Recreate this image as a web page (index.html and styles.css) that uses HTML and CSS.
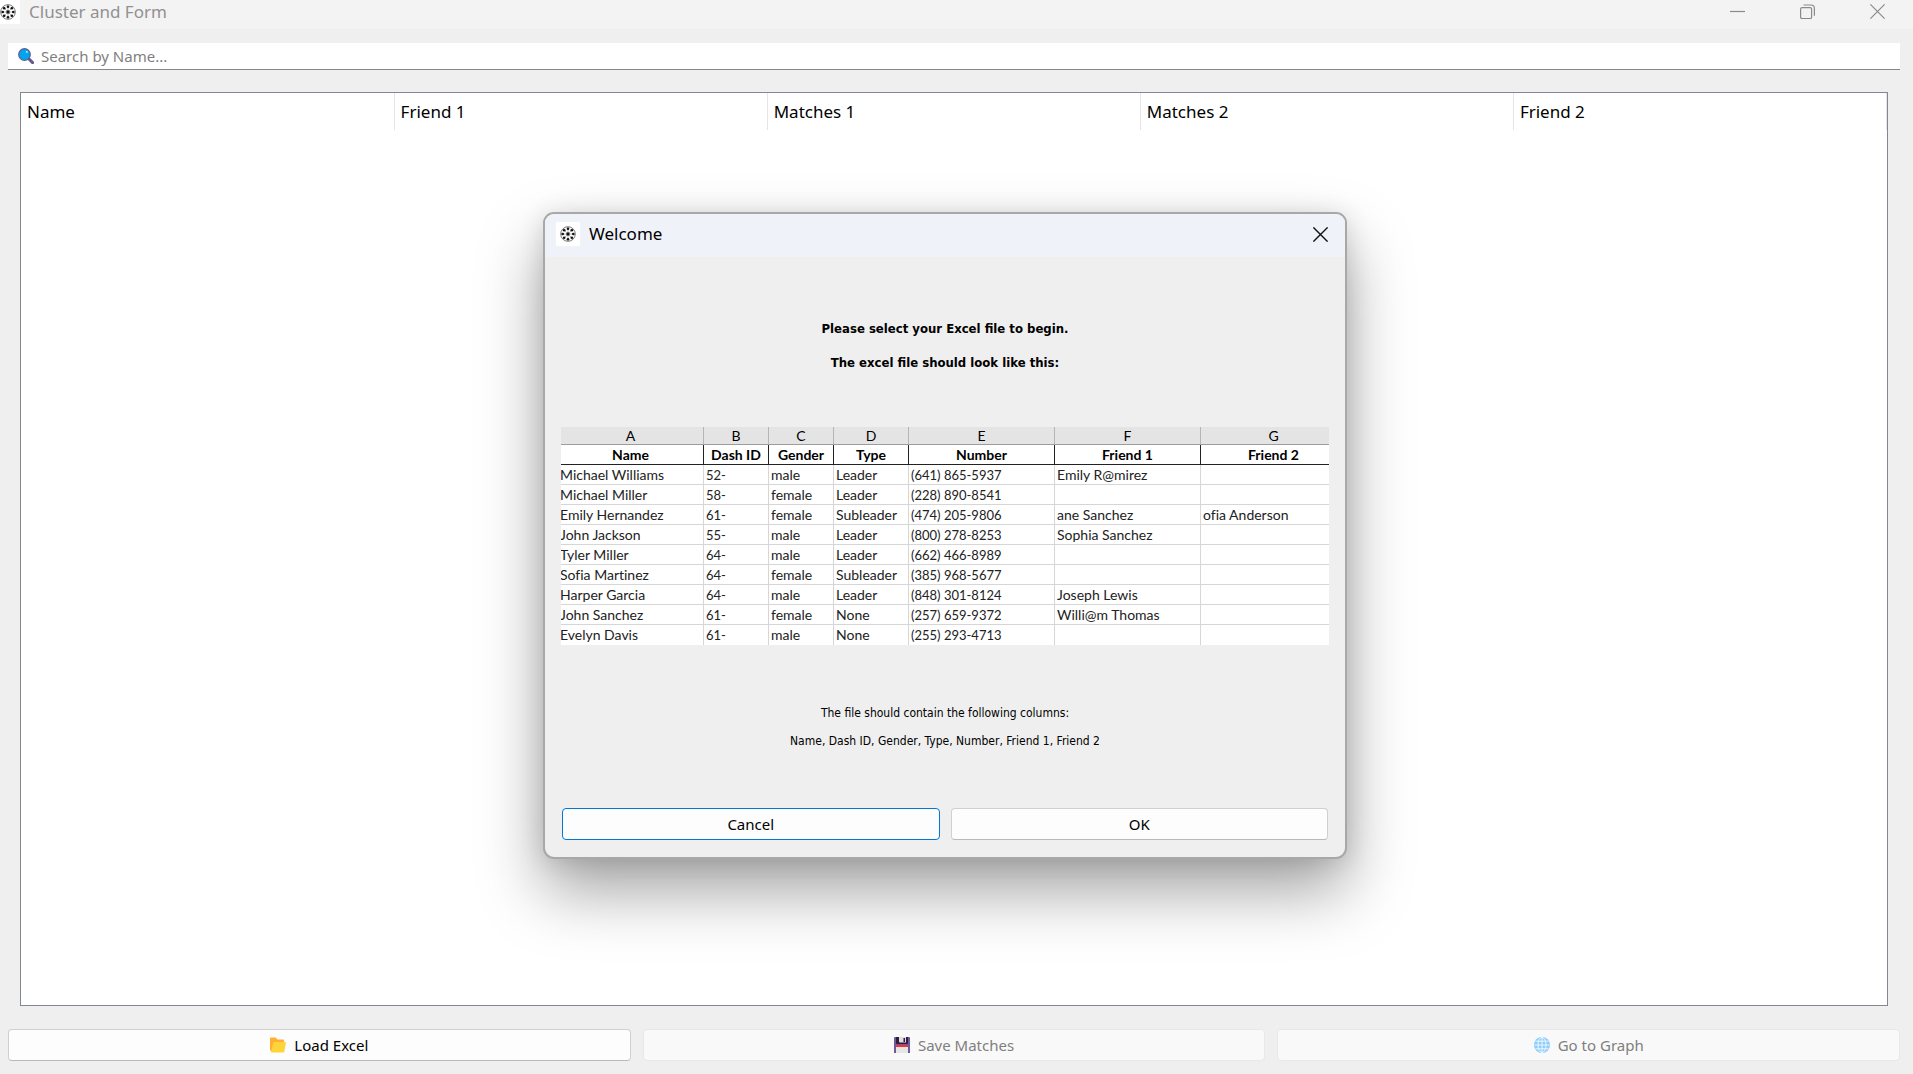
FILE: index.html
```html
<!DOCTYPE html>
<html lang="en">
<head>
<meta charset="utf-8">
<meta name="viewport" content="width=device-width, initial-scale=1">
<title>Cluster and Form</title>
<link rel="stylesheet" href="styles.css">
</head>
<body>
<svg class="defs" aria-hidden="true">
  <symbol id="wheel" viewBox="0 0 16 16">
    <circle cx="8" cy="8" r="7.3" fill="none" stroke="#777" stroke-width="1"/>
    <path d="M8 1v14M1 8h14M3 3l10 10M13 3L3 13" stroke="#999" stroke-width=".7"/>
    <g fill="#111"><circle cx="8" cy="8" r="1.7"/><circle cx="8" cy="2.7" r="1.3"/><circle cx="8" cy="13.3" r="1.3"/><circle cx="2.7" cy="8" r="1.3"/><circle cx="13.3" cy="8" r="1.3"/><circle cx="4.2" cy="4.2" r="1.3"/><circle cx="11.8" cy="4.2" r="1.3"/><circle cx="4.2" cy="11.8" r="1.3"/><circle cx="11.8" cy="11.8" r="1.3"/></g>
  </symbol>
</svg>
<div class="window">
  <header class="titlebar">
    <span class="app-icon"><svg width="16" height="16"><use href="#wheel"/></svg></span>
    <h1 class="title">Cluster and Form</h1>
    <div class="controls">
      <button class="control" aria-label="Minimize"><svg width="15" height="15" viewBox="0 0 15 15"><path d="M0 7.5h15"/></svg></button>
      <button class="control" aria-label="Restore"><svg width="15" height="15" viewBox="0 0 15 15"><rect x=".6" y="3.6" width="11" height="11" rx="1.5"/><path d="M3.5 1h7.5a3.4 3.4 0 0 1 3.4 3.4v7.4"/></svg></button>
      <button class="control" aria-label="Close"><svg width="15" height="15" viewBox="0 0 15 15"><path d="M.4.4l14.2 14.2M14.6.4L.4 14.6"/></svg></button>
    </div>
  </header>
  <main class="content">
    <label class="search">
      <svg width="16" height="16" viewBox="0 0 16 16"><path d="M10 10l4.6 4.6" stroke="#635994" stroke-width="3" stroke-linecap="round"/><circle cx="6.5" cy="6.5" r="5.8" fill="#00a6ed" stroke="#635994" stroke-width="1.2"/><circle cx="8.8" cy="4" r="1" fill="#b9e8ff"/></svg>
      <input class="search-input" type="text" placeholder="Search by Name..." aria-label="Search by Name">
    </label>
    <section class="results">
      <table class="matches">
        <thead><tr><th>Name</th><th>Friend 1</th><th>Matches 1</th><th>Matches 2</th><th>Friend 2</th></tr></thead>
      </table>
    </section>
    <div class="actions">
      <button class="button"><svg width="16" height="16" viewBox="0 0 16 16"><path d="M0 1.5Q0 .5 1 .5h4.5l2 2H13q1 0 1 1V14H1.5Q0 14 0 12.500z" fill="#ffb02e"/><path d="M4.500 5h10.700q.9 0 .7.900L14.300 14.700q-.2.800-1 .800H1.800q-1 0-.8-1L3.300 5.800Q3.500 5 4.500 5z" fill="#ffd43a"/></svg>Load Excel</button>
      <button class="button" disabled><svg width="16" height="16" viewBox="0 0 16 16"><path d="M0 1q0-1 1-1h14q1 0 1 1v15H0z" fill="#6b5b9a"/><path d="M2 0h12v6q0 1-1 1H3Q2 7 2 6z" fill="#321b41"/><path d="M5 0h7v5.500H6q-1 0-1-1z" fill="#e0e0e0"/><path d="M9.500 1h1.500v4H9.500z" fill="#321b41"/><path d="M2 8h12v8H2z" fill="#e6e6e6"/><path d="M2 8h12v2H2z" fill="#f8312f"/></svg>Save Matches</button>
      <button class="button" disabled><svg width="16" height="16" viewBox="0 0 16 16"><circle cx="8" cy="8" r="8" fill="#8dcdfc"/><g fill="none" stroke="#f4faff" stroke-width=".9"><path d="M8 0v16M.5 8h15M1.500 4.200h13M1.500 11.800h13"/><ellipse cx="8" cy="8" rx="4" ry="7.500"/></g></svg>Go to Graph</button>
    </div>
  </main>
</div>
<dialog class="dialog" open aria-labelledby="dialog-title">
  <header class="dialog-bar">
    <span class="dialog-icon"><svg width="16" height="16"><use href="#wheel"/></svg></span>
    <h2 class="title" id="dialog-title">Welcome</h2>
    <button class="dialog-close" aria-label="Close"><svg width="15" height="15" viewBox="0 0 15 15"><path d="M.4.4l14.200 14.200M14.600.4L.4 14.600"/></svg></button>
  </header>
  <div class="dialog-body">
    <div class="intro"><p>Please select your Excel file to begin.</p><p>The excel file should look like this:</p></div>
    <div class="sheet-frame">
      <table class="sheet">
        <colgroup><col class="w-wide"><col class="w-small"><col class="w-small"><col class="w-type"><col class="w-wide"><col class="w-wide"><col class="w-wide"></colgroup>
        <thead>
          <tr class="letters"><th>A</th><th>B</th><th>C</th><th>D</th><th>E</th><th>F</th><th>G</th></tr>
          <tr class="fields"><th>Name</th><th>Dash ID</th><th>Gender</th><th>Type</th><th>Number</th><th>Friend 1</th><th>Friend 2</th></tr>
        </thead>
        <tbody>
          <tr><td>Michael Williams</td><td class="num">52-</td><td>male</td><td>Leader</td><td class="num">(641) 865-5937</td><td>Emily R@mirez</td><td></td></tr>
          <tr><td>Michael Miller</td><td class="num">58-</td><td>female</td><td>Leader</td><td class="num">(228) 890-8541</td><td></td><td></td></tr>
          <tr><td>Emily Hernandez</td><td class="num">61-</td><td>female</td><td>Subleader</td><td class="num">(474) 205-9806</td><td>ane Sanchez</td><td>ofia Anderson</td></tr>
          <tr><td>John Jackson</td><td class="num">55-</td><td>male</td><td>Leader</td><td class="num">(800) 278-8253</td><td>Sophia Sanchez</td><td></td></tr>
          <tr><td>Tyler Miller</td><td class="num">64-</td><td>male</td><td>Leader</td><td class="num">(662) 466-8989</td><td></td><td></td></tr>
          <tr><td>Sofia Martinez</td><td class="num">64-</td><td>female</td><td>Subleader</td><td class="num">(385) 968-5677</td><td></td><td></td></tr>
          <tr><td>Harper Garcia</td><td class="num">64-</td><td>male</td><td>Leader</td><td class="num">(848) 301-8124</td><td>Joseph Lewis</td><td></td></tr>
          <tr><td>John Sanchez</td><td class="num">61-</td><td>female</td><td>None</td><td class="num">(257) 659-9372</td><td>Willi@m Thomas</td><td></td></tr>
          <tr><td>Evelyn Davis</td><td class="num">61-</td><td>male</td><td>None</td><td class="num">(255) 293-4713</td><td></td><td></td></tr>
        </tbody>
      </table>
    </div>
    <div class="note"><p>The file should contain the following columns:</p><p>Name, Dash ID, Gender, Type, Number, Friend 1, Friend 2</p></div>
    <div class="dialog-actions"><button class="button default">Cancel</button><button class="button">OK</button></div>
  </div>
</dialog>
</body>
</html>
```
FILE: styles.css
```css
* { box-sizing: border-box; }
body { margin: 0; background: #efefef; color: #000; font-family: "Noto Sans", "Open Sans", sans-serif; font-size: 17px; }
button, input { font: inherit; color: inherit; }
svg { flex: none; }
.defs { position: absolute; width: 0; height: 0; }
.window { min-height: 100vh; display: flex; flex-direction: column; }
.title { margin: 0; font-size: 17px; font-weight: 400; line-height: 24px; }

.titlebar { height: 29px; display: flex; align-items: flex-start; gap: 9px; padding-right: 1px; background: #f3f3f3; color: #919191; }
.app-icon { width: 20px; height: 24px; display: flex; align-items: center; background: #fff; }
.controls { margin-left: auto; display: flex; }
.control { width: 70px; height: 23px; display: grid; place-items: center; padding: 0; border: 0; background: none; }
.control svg { fill: none; stroke: #8a8a8a; stroke-width: 1.2; }

.content { flex: 1; display: flex; flex-direction: column; padding: 14px 13px 13px 8px; }
.search { height: 27px; display: flex; align-items: center; gap: 7px; padding: 0 10px; background: #fff; border-bottom: 1px solid #868686; }
.search-input { flex: 1; min-width: 0; height: 26px; padding: 0; border: 0; outline: 0; background: none; font-size: 15px; }
.search-input::placeholder { color: #7f7f7f; opacity: 1; }
.results { flex: 1; margin: 22px 12px 23px; background: #fff; border: 1px solid #828790; }
.matches { width: 100%; table-layout: fixed; border-collapse: collapse; }
.matches th { height: 37px; padding: 0 6px; text-align: left; font-weight: 400; border-right: 1px solid #e5e5e5; }
.actions { display: flex; gap: 12px; }
.button { flex: 1; height: 32px; display: flex; align-items: center; justify-content: center; gap: 8px; padding: 0; background: #fdfdfd; border: 1px solid #d0d0d0; border-bottom-color: #b9b9b9; border-radius: 4px; font-size: 15px; }
.button:disabled { background: #f9f9f9; border-color: #e8e8e8; color: #7f7f7f; }
.button.default { border-color: #0078d4; }

.dialog { position: absolute; top: 212px; left: 543px; width: 804px; margin: 0; padding: 0; color: #000; background: #efefef; border: 2px solid #a8a8a8; border-radius: 11px; box-shadow: 0 32px 64px rgba(0, 0, 0, .36), 0 2px 24px rgba(0, 0, 0, .12); }
.dialog-bar { height: 43px; display: flex; align-items: center; gap: 9px; padding: 0 17px 3px 11px; background: #f0f2f9; border-radius: 9px 9px 0 0; }
.dialog-icon { width: 24px; height: 24px; display: grid; place-items: center; background: #fff; }
.dialog-close { margin-left: auto; padding: 0; border: 0; background: none; display: grid; }
.dialog-close svg { fill: none; stroke: #111; stroke-width: 1.4; }
.dialog-body { padding: 0 16px 17px; }
.intro { padding: 60px 0 42px; text-align: center; font: bold 13px/24px "DejaVu Sans Condensed", "DejaVu Sans", sans-serif; }
.intro p { margin: 0 0 10px; }
.sheet-frame { overflow: hidden; background: #fff; font-family: Lato, sans-serif; font-size: 14px; font-variant-ligatures: none; }
.sheet { width: 789px; margin-left: -3px; table-layout: fixed; border-collapse: separate; border-spacing: 0; line-height: 18px; }
.w-small { width: 65px; }
.w-type { width: 75px; }
.w-wide { width: 146px; }
.sheet th, .sheet td { padding: 0; white-space: nowrap; border-right: 1px solid #d6d6d6; border-bottom: 1px solid #d6d6d6; }
.sheet td { height: 20px; padding-left: 2px; color: #222; }
.sheet .num { font-size: 13px; }
.sheet tr:last-child td { border-bottom: 0; }
.sheet .letters th { height: 18px; line-height: 16px; background: #e4e4e4; font-weight: 400; border-right-color: #b5b5b5; border-bottom-color: #9c9c9c; }
.sheet .fields th { height: 20px; border-right-color: #222; border-bottom-color: #222; }
.note { padding: 54px 0 53px; text-align: center; font: 12px/28px "DejaVu Sans Condensed", "DejaVu Sans", sans-serif; }
.note p { margin: 0; }
.dialog-actions { display: flex; gap: 11px; padding: 0 1px; }
```
